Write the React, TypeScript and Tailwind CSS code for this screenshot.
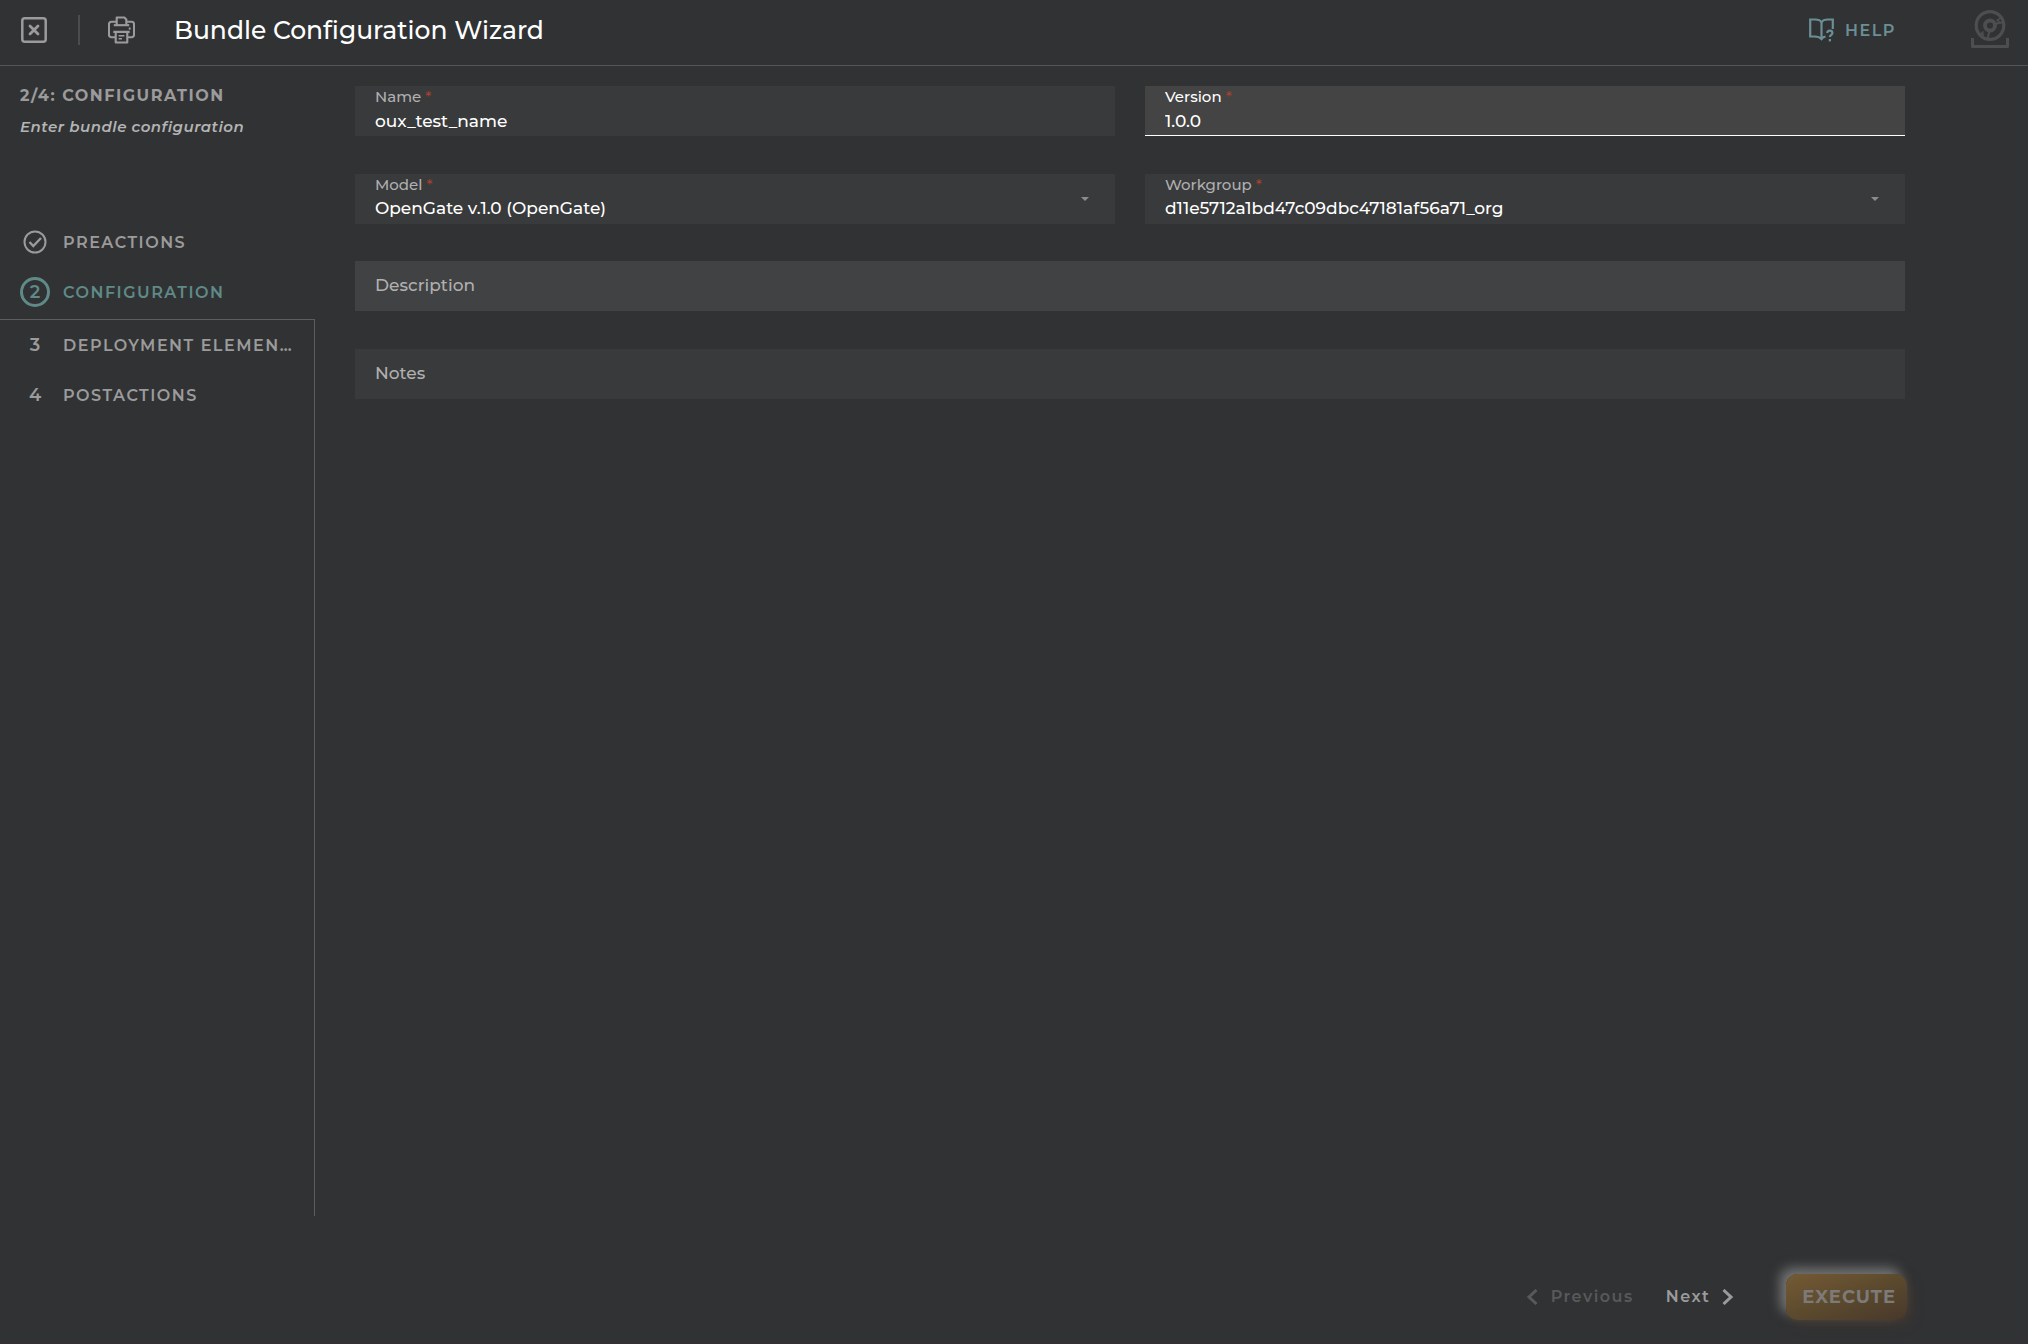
import React, { useState } from "react";
import clsx from "clsx";

type Step = { label: string; done?: boolean; active?: boolean };

const steps: Step[] = [
  { label: "Preactions", done: true },
  { label: "Configuration", active: true },
  { label: "Deployment elements" },
  { label: "Postactions" },
];

const CloseIcon = () => (
  <svg width="26" height="26" viewBox="0 0 26 26" fill="none" stroke="currentColor">
    <rect x="1.3" y="1.3" width="23.4" height="23.4" rx="2.500" strokeWidth="2.500" />
    <path d="M9 9l8 8M17 9l-8 8" strokeWidth="2.800" strokeLinecap="round" />
  </svg>
);

const PrinterIcon = () => (
  <svg
    width="27"
    height="28"
    viewBox="0 0 28 28"
    fill="none"
    stroke="currentColor"
    strokeWidth="2.200"
    strokeLinejoin="round"
  >
    <path d="M9 9V1h8l2 2v6" />
    <path d="M6 9h16" />
    <path d="M9 5.500H3.500A2.500 2.500 0 0 0 1 8v11a2.500 2.500 0 0 0 2.500 2.500H8M19 5.500h5.500A2.500 2.500 0 0 1 27 8v11a2.500 2.500 0 0 1-2.500 2.500H20" />
    <path d="M5.500 16h17M8 16v11h12V16" />
    <path d="M11 20h6M11 23h3.500" strokeWidth="1.600" />
    <path d="M21.500 12.500h2" />
  </svg>
);

const HelpIcon = () => (
  <svg width="26" height="24" viewBox="0 0 26 24" fill="none" stroke="currentColor" strokeWidth="2.200">
    <path d="M16.500 18.700c-1.700.2-3 .9-4 2.300C11 19.300 8 18.500 5.500 18.500H1.200V1.500h5c3 0 5.300 1 6.300 2.800 1-1.800 3.300-2.800 6.300-2.800h5v9.500" />
    <path d="M12.500 4.500v16" />
    <path d="M18.300 15c0-1.500 1-2.400 2.500-2.400s2.600.9 2.600 2.300c0 1.900-2.500 1.900-2.500 4.100" />
    <path d="M20.900 21v2.400" />
  </svg>
);

const LogoIcon = () => (
  <svg width="38" height="40" viewBox="0 0 38 40" fill="none" stroke="currentColor">
    <circle cx="19" cy="15.500" r="13.800" strokeWidth="3.200" />
    <circle cx="19" cy="15.500" r="5" strokeWidth="3.800" />
    <path d="M24 13.800l8-1.600M18.500 21l-1.800 7" strokeWidth="2" />
    <path d="M26 11l3-3M28.500 12l-3-2.500M9.500 24.500l3-3M13 25.500l-2-2.500" strokeWidth="1.600" />
    <path d="M1.500 28v8.500h35V28" strokeWidth="3" strokeLinejoin="round" />
  </svg>
);

const CheckIcon = () => (
  <svg width="24" height="24" viewBox="0 0 24 24" fill="none" stroke="currentColor">
    <circle cx="12" cy="12" r="10.500" strokeWidth="2" />
    <path d="M6.500 12l3.800 4 7.700-8" strokeWidth="2.400" />
  </svg>
);

const Chevron = ({ right }: { right?: boolean }) => (
  <svg width="12" height="16" viewBox="0 0 12 16" fill="none" stroke="currentColor" strokeWidth="3">
    <path d={right ? "M1.500 1l7.500 7-7.500 7" : "M10.500 1L3 8l7.500 7"} />
  </svg>
);

type FieldProps = {
  id: string;
  label: string;
  focused?: boolean;
  children: React.ReactNode;
};

function Field({ id, label, focused, children }: FieldProps) {
  return (
    <div
      className={clsx(
        "flex h-[50px] flex-col border-b px-5",
        focused ? "border-white bg-[#444444]" : "border-[#393a3c] bg-[#393a3c]",
      )}
    >
      <label
        htmlFor={id}
        className={clsx(
          "text-[15px] leading-[22px] font-medium",
          focused ? "text-white" : "text-[#b0b0b0]",
        )}
      >
        {label} <span className="text-[#a84030]">*</span>
      </label>
      {children}
    </div>
  );
}

function SelectField({ id, label, value }: { id: string; label: string; value: string }) {
  return (
    <Field id={id} label={label}>
      <div className="flex items-center">
        <select
          id={id}
          defaultValue={value}
          className="h-[22px] min-w-0 flex-1 appearance-none bg-transparent text-[17px] font-medium text-white outline-none"
        >
          <option>{value}</option>
        </select>
        <svg width="8" height="4" viewBox="0 0 8 4" className="mr-1.5 mb-4 shrink-0 fill-[#8c8c8c]">
          <path d="M0 0h8L4 4z" />
        </svg>
      </div>
    </Field>
  );
}

function StepItem({ step, number }: { step: Step; number: number }) {
  return (
    <li
      className={clsx(
        "flex h-[50px] items-center gap-[13px] pr-[19px] pl-5",
        step.active && "text-[#5f8a88]",
      )}
    >
      <span
        className={clsx(
          "flex size-[30px] shrink-0 items-center justify-center text-lg font-semibold",
          step.active && "rounded-full border-[3px] border-[#5f8a88]",
        )}
      >
        {step.done ? <CheckIcon /> : number}
      </span>
      <span className="truncate pt-0.5 text-base font-semibold tracking-[1.500px] uppercase">
        {step.label}
      </span>
    </li>
  );
}

export default function App() {
  const [name, setName] = useState("oux_test_name");
  const [version, setVersion] = useState("1.0.0");

  return (
    <div className="flex min-h-screen flex-col border-b border-[#352f33] bg-[#313234] font-['Montserrat','Inter',sans-serif] text-[#9b9b9b]">
      <header className="flex h-[66px] items-center border-b border-[#545556] pr-[19px] pb-[5px] pl-[21px]">
        <button type="button" aria-label="Close">
          <CloseIcon />
        </button>
        <div className="ml-[31px] h-[30px] w-0.5 bg-[#4b4c4e]" />
        <div className="ml-7">
          <PrinterIcon />
        </div>
        <h1 className="ml-[39px] pt-0.5 text-[25px] font-medium text-white">Bundle Configuration Wizard</h1>
        <a href="#help" className="ml-auto flex items-center gap-2.5 text-[#6b8f95]">
          <HelpIcon />
          <span className="pt-0.5 text-base font-semibold tracking-[1.500px]">HELP</span>
        </a>
        <div className="ml-[75px] text-[#4d4f4f]">
          <LogoIcon />
        </div>
      </header>

      <div className="flex flex-1">
        <aside className="flex w-[315px] shrink-0 flex-col">
          <div className="h-[151px] px-5 pt-[18px]">
            <h2 className="text-base leading-6 font-bold tracking-[1.500px]">2/4: CONFIGURATION</h2>
            <p className="mt-[7px] text-[15px] leading-6 font-semibold tracking-[0.500px] text-[#b4b4b4] italic">
              Enter bundle configuration
            </p>
          </div>
          <ol className="pb-0.5">
            {steps.slice(0, 2).map((step, i) => (
              <StepItem key={step.label} step={step} number={i + 1} />
            ))}
          </ol>
          <ol start={3} className="-mb-px flex-1 border-t border-r border-[#5c5d5e]">
            {steps.slice(2).map((step, i) => (
              <StepItem key={step.label} step={step} number={i + 3} />
            ))}
          </ol>
        </aside>

        <form id="bundle" className="flex flex-1 flex-col gap-[37px] pt-5 pr-[123px] pl-10">
          <div className="grid grid-cols-2 gap-x-[30px] gap-y-[38px]">
            <Field id="name" label="Name">
              <input
                id="name"
                value={name}
                onChange={(e) => setName(e.target.value)}
                className="h-[26px] bg-transparent text-[17px] font-medium text-white outline-none"
              />
            </Field>
            <Field id="version" label="Version" focused>
              <input
                id="version"
                value={version}
                onChange={(e) => setVersion(e.target.value)}
                className="h-[26px] bg-transparent text-[17px] font-medium text-white outline-none"
              />
            </Field>
            <SelectField id="model" label="Model" value="OpenGate v.1.0 (OpenGate)" />
            <SelectField id="workgroup" label="Workgroup" value="d11e5712a1bd47c09dbc47181af56a71_org" />
          </div>
          <div className="flex flex-col gap-[38px]">
            <input
              aria-label="Description"
              placeholder="Description"
              className="h-[50px] bg-[#414243] px-5 pb-0.5 text-[17px] font-medium outline-none placeholder:text-[#b0b0b0]"
            />
            <input
              aria-label="Notes"
              placeholder="Notes"
              className="h-[50px] bg-[#393a3c] px-5 pb-0.5 text-[17px] font-medium outline-none placeholder:text-[#b0b0b0]"
            />
          </div>
        </form>
      </div>

      <footer className="flex h-32 items-center justify-end pt-[35px] pr-[121px] text-base font-semibold tracking-[1.500px]">
        <button type="button" disabled className="flex items-center gap-[13px] text-[#58595b]">
          <Chevron />
          Previous
        </button>
        <button type="button" className="ml-8 flex items-center gap-3 text-[#9b9b9b]">
          Next
          <Chevron right />
        </button>
        <button
          type="submit"
          form="bundle"
          className="ml-[52px] h-[46px] rounded-xl bg-linear-160 from-[#755a34] via-[#5c4a2e] to-[#48382a] pr-[11px] pl-4 text-lg font-bold tracking-[1px] text-[#7c7b79] shadow-[-6px_-6px_12px_#737474,4px_4px_12px_#423830]"
        >
          EXECUTE
        </button>
      </footer>
    </div>
  );
}
